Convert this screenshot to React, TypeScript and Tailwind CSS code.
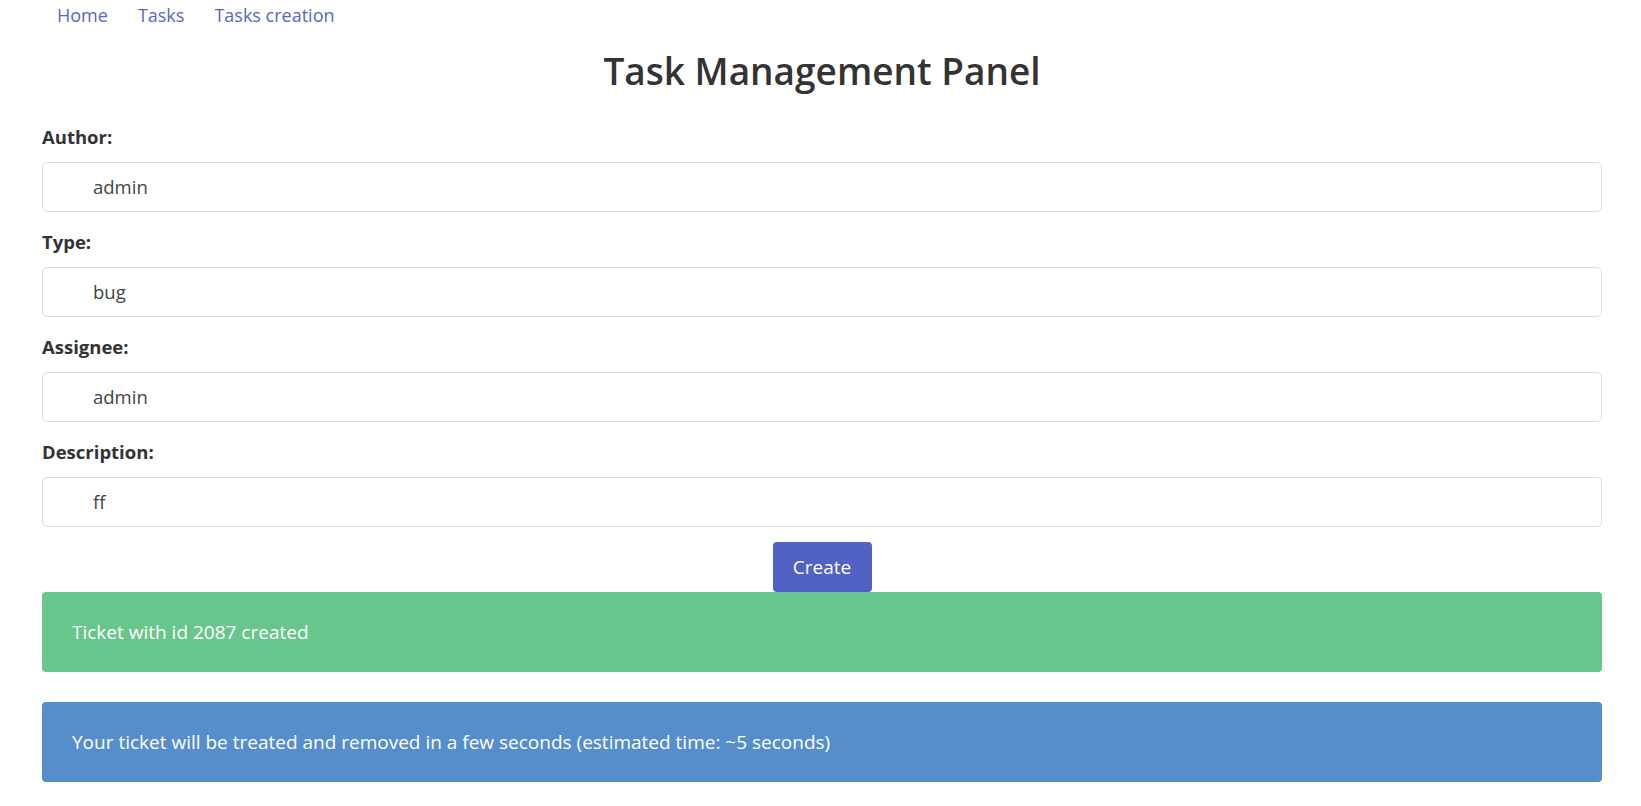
import React from "react";

const fields = [
  { label: "Author:", value: "admin" },
  { label: "Type:", value: "bug" },
  { label: "Assignee:", value: "admin" },
  { label: "Description:", value: "ff" },
];

export default function App() {
  return (
    <div
      className="min-h-screen bg-white pl-[42px] pr-[39px] text-[#333333]"
      style={{ fontFamily: '"Open Sans", "Noto Sans", sans-serif' }}
    >
      <nav className="flex h-[32px] items-start">
        {["Home", "Tasks", "Tasks creation"].map((t) => (
          <a
            key={t}
            href="#"
            className="px-[15px] text-[18px] leading-[30px] text-[#5a67c2]"
          >
            {t}
          </a>
        ))}
      </nav>
      <h1 className="mt-[16px] h-[46px] text-center text-[37px] font-semibold leading-[46px] text-[#333333]">
        Task Management Panel
      </h1>
      <div className="mt-[30px] flex flex-col gap-[17px]">
        {fields.map((f) => (
          <div key={f.label} className="flex flex-col">
            <label className="mb-[12px] h-[26px] text-[18.5px] font-bold leading-[26px] text-[#333333]">
              {f.label}
            </label>
            <div className="flex h-[50px] items-center rounded-[5px] border border-[#dcdcdc] pl-[50px] text-[18.5px] text-[#444444]">
              {f.value}
            </div>
          </div>
        ))}
      </div>
      <div className="mt-[15px] flex justify-center">
        <button className="flex h-[50px] w-[99px] items-center justify-center rounded-[4px] bg-[#5161c4] text-[19px] text-white">
          Create
        </button>
      </div>
      <div className="flex h-[80px] items-center rounded-[4px] bg-[#68c58c] pl-[30px] text-[19px] text-white">
        Ticket with id 2087 created
      </div>
      <div className="mt-[30px] flex h-[80px] items-center rounded-[4px] bg-[#568ecd] pl-[30px] text-[19px] text-white">
        Your ticket will be treated and removed in a few seconds (estimated time: ~5 seconds)
      </div>
    </div>
  );
}
